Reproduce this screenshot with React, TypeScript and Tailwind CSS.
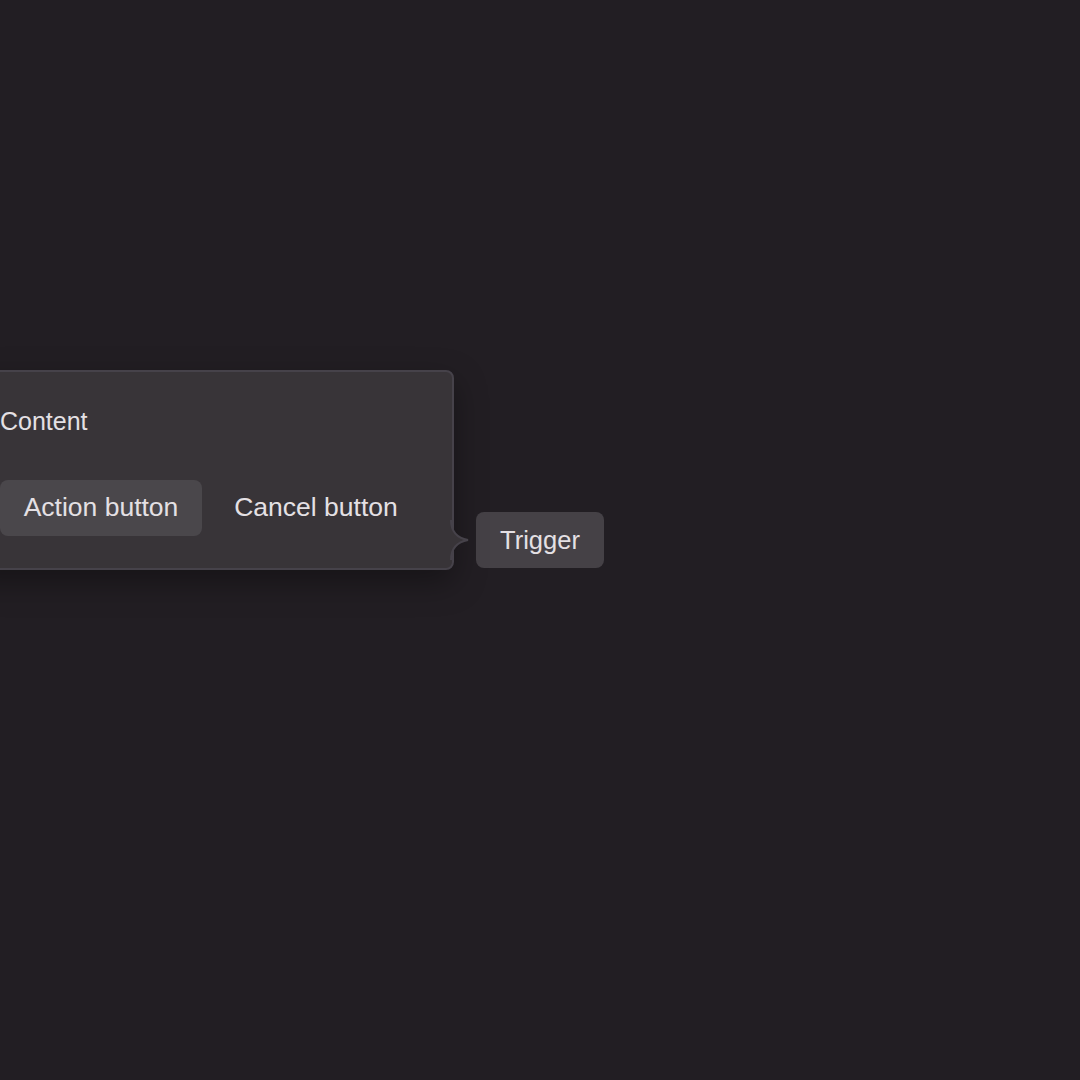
import React from "react";

export default function App() {
  return (
    <div
      className="flex h-[1080px] w-[1080px] items-center justify-center overflow-hidden bg-[#221e23] text-[#e4e0e4]"
      style={{ fontFamily: '"Liberation Sans", Arial, sans-serif' }}
    >
      <div className="relative">
        <button className="h-14 w-[128px] rounded-lg bg-[#454146] text-[25.5px] leading-8 text-[#e4e0e4]">
          Trigger
        </button>

        <div className="absolute bottom-[-2px] right-full mr-[22px] w-[488px] rounded-lg border-2 border-[#46424a] bg-[#383438] p-8 shadow-[0_12px_32px_rgba(0,0,0,0.35)]">
          <p className="text-[25px] leading-[34px]">Content</p>
          <div className="mt-[42px] flex gap-[10px]">
            <button className="h-14 w-[202px] rounded-lg bg-[#4a474b] text-[26.5px] text-[#e4e0e4]">
              Action button
            </button>
            <button className="h-14 w-[208px] rounded-lg text-[26.5px] text-[#e4e0e4]">
              Cancel button
            </button>
          </div>

          {/* arrow pointing at the trigger */}
          <svg
            className="absolute left-full top-[148px] -ml-[2px]"
            width="20"
            height="40"
            viewBox="0 0 20 40"
          >
            <path
              d="M0 0 L1 0 C1 11 7 18 18 20 C7 22 1 29 1 40 L0 40 Z"
              fill="#383438"
            />
            <path
              d="M1 0 C1 11 7 18 18 20 C7 22 1 29 1 40"
              fill="none"
              stroke="#46424a"
              strokeWidth="2"
            />
          </svg>
        </div>
      </div>
    </div>
  );
}
